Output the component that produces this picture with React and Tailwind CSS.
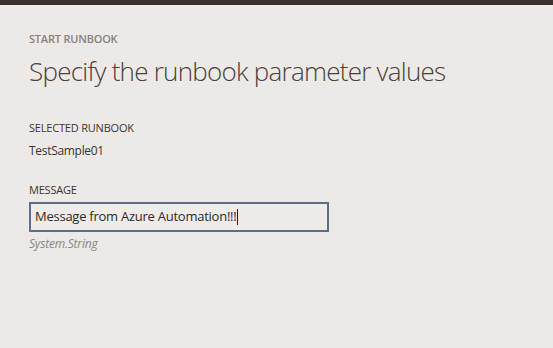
export default function App() {
  return (
    <div className="w-[553px] h-[348px] bg-[#ece9e6] flex flex-col overflow-hidden" style={{ fontFamily: '"Open Sans", "Noto Sans", sans-serif' }}>
      <div className="h-[5px] bg-[#3a302b]" />
      <div className="pl-[29px] pt-[26px]">
        <div className="text-[11px] font-semibold text-[#8a817c] leading-[15px] tracking-[-0.2px]">START RUNBOOK</div>
        <h1 className="mt-[8px] text-[26px] font-light text-[#4a413c] leading-[34px] tracking-[-0.75px]">
          Specify the runbook parameter values
        </h1>
        <div className="mt-[32px] text-[11px] text-[#3a3533] leading-[15px] tracking-[-0.2px]">SELECTED RUNBOOK</div>
        <div className="mt-[8px] text-[12px] text-[#3a3533] leading-[16px] tracking-[-0.3px]">TestSample01</div>
        <div className="mt-[23px] text-[11px] text-[#3a3533] leading-[15px] tracking-[-0.2px]">MESSAGE</div>
        <div className="mt-[5px] w-[300px] h-[30px] border-2 border-[#5c6f88] bg-[#eeebe8] flex items-center pl-[4px]">
          <span className="text-[13px] text-[#2e2a28] tracking-[-0.25px]">Message from Azure Automation!!!</span>
          <span className="w-px h-[16px] bg-[#222] ml-px" />
        </div>
        <div className="mt-[4px] text-[12px] italic text-[#8a8583] leading-[16px] tracking-[-0.2px]">System.String</div>
      </div>
    </div>
  );
}
